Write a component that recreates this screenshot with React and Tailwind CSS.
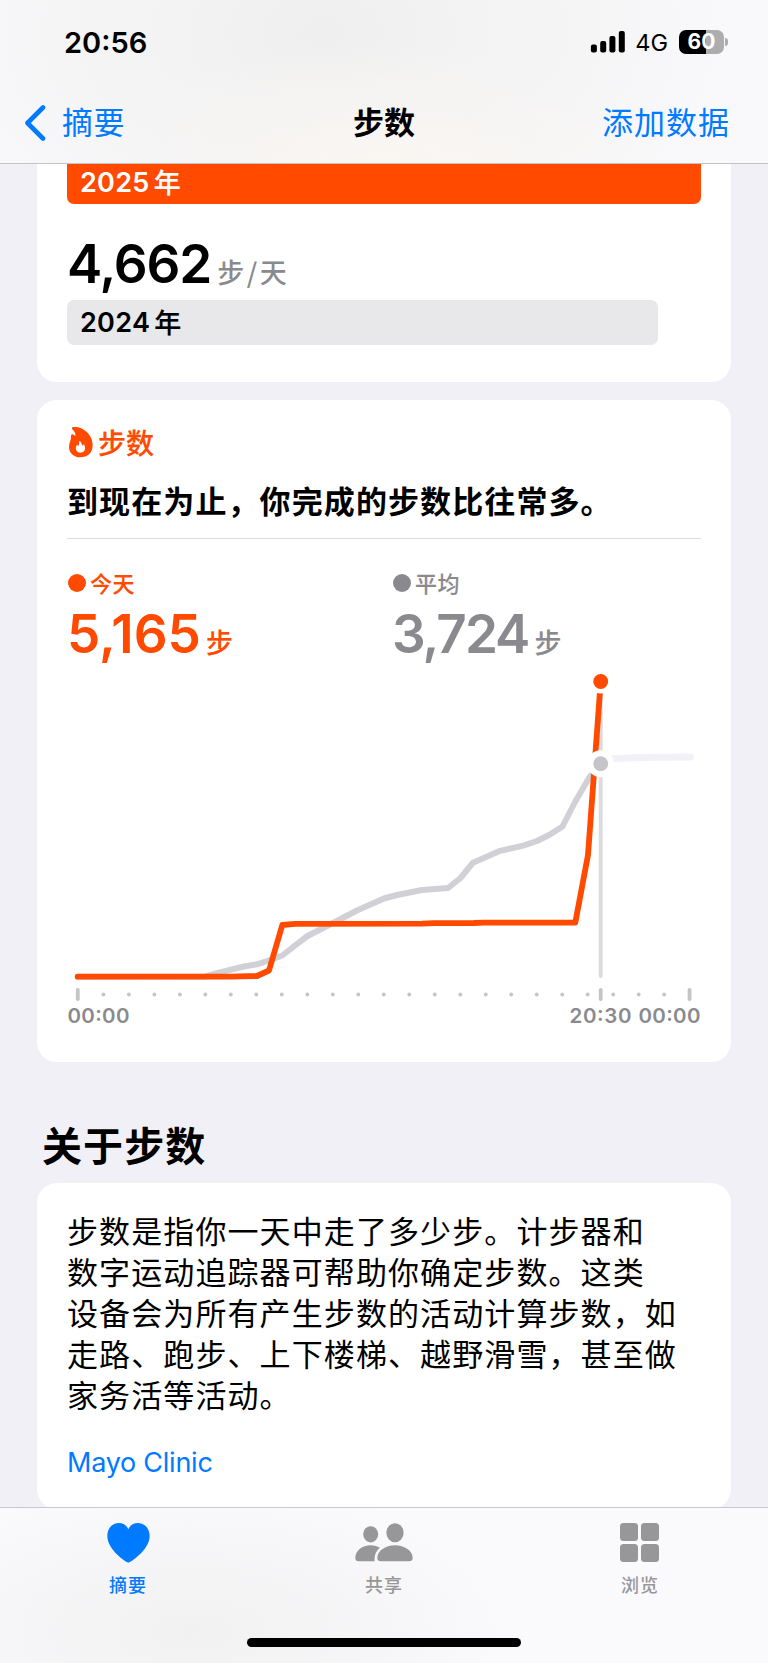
// App.jsx
import React from 'react';

const todayPoints =
  '77.7,976.7 231,976.7 240,976.3 257,976 269,970.5 282.3,925 295,923.8 422,923.7 434,923.1 474,923 484,922.6 575.3,922.6 588,855 600.7,681.5';

const averagePoints =
  '77.7,976.7 205,976.5 218,973 231,969.7 244,966.5 257,964.3 270,960 282.3,955.5 295,945.5 307.5,936 333,923 358,910 384,898.5 397,895 422,890 448,888 460.5,878 473,862.7 499,851.2 524,845.3 537,841 550,834.5 562.5,826.5 575,802 589,778 600.7,763.7';

const hours = Array.from({ length: 25 }, (_, i) => i);

const Flame = () => (
  <svg className="ml-px w-[26px] h-8" viewBox="115 108 78 96">
    <path
      fill="#ff4a00"
      fillRule="evenodd"
      d="M128 112C153 106 189 129 189 166C189 189 173 202 152 202C131 202 118 188 118 170C118 158 124 152 124 142C123 137 125 133 128 133C132 133 134 136 137 138C138 132 135 124 129 119C126 116 126 114 128 112ZM149 152C148 157 149 163 147 166C146 168 143 167 142 164C135 174 138 188 152 188C168 188 169 171 162 161C162 165 161 167 158 166C155 161 156 156 149 152Z"
    />
  </svg>
);

const StatusBar = () => (
  <div className="flex h-[84px] items-center justify-between pl-[64px] pr-[40px]">
    <div className="text-[29px] leading-none font-semibold">20:56</div>
    <div className="flex items-center">
      <svg className="w-[35px] h-6" viewBox="0 0 35 24">
        <rect x="0.9" y="14.5" width="6" height="8" rx="2" />
        <rect x="10.2" y="11" width="6" height="11.5" rx="2" />
        <rect x="19.4" y="6" width="6" height="16.5" rx="2" />
        <rect x="28.8" y="1" width="6" height="21.5" rx="2" />
      </svg>
      <span className="ml-[10px] pt-[2px] text-[23.5px] leading-none">4G</span>
      <div className="ml-[11px] flex h-6 w-[45px] items-center justify-center rounded-[7px] bg-[linear-gradient(90deg,#000_60%,#adadad_60%)] text-[21px] font-bold text-white">
        60
      </div>
      <div className="ml-[1px] h-2 w-[3px] rounded-r-full bg-[#adadad]"></div>
    </div>
  </div>
);

const Header = () => (
  <header className="h-[164px] shrink-0 border-b border-[#c4c3c6] bg-[radial-gradient(ellipse_300px_120px_at_50%_100%,#faf6f2_0%,transparent_100%),radial-gradient(ellipse_420px_260px_at_42%_20%,#efefef_0%,#f9f9fb_100%)]">
    <StatusBar />
    <div className="grid h-[78px] grid-cols-3 items-center pl-6 pr-[38px] text-[31px] leading-none font-['Noto_Sans_CJK_SC',sans-serif]">
      <div className="flex items-center text-[#007aff]">
        <svg className="w-[22px] h-[38px]" viewBox="0 0 22 38" fill="none">
          <path d="M19 3.5L3.5 19L19 34.5" stroke="currentColor" strokeWidth="4.6" strokeLinecap="round" strokeLinejoin="round" />
        </svg>
        <span className="ml-4 pb-[5px] tracking-[0.5px]">摘要</span>
      </div>
      <div className="pb-[5px] pl-[14px] text-center font-bold">步数</div>
      <div className="pb-[5px] text-right tracking-[1px] whitespace-nowrap text-[#007aff]">添加数据</div>
    </div>
  </header>
);

const Chart = () => (
  <svg className="block h-[362px] w-[634px]" viewBox="67 667 634 362">
    <g fill="none" strokeLinejoin="round">
      <path d="M600.7 686V976" stroke="#dcdcde" strokeWidth="4" strokeLinecap="round" />
      <path d="M602 759.2L639 757.6L690.5 757" stroke="#f2f1f7" strokeWidth="7" strokeLinecap="round" />
      <polyline points={averagePoints} stroke="#d1d0d6" strokeWidth="6" strokeLinecap="round" />
      <polyline points={todayPoints} stroke="#ff4a00" strokeWidth="5.8" strokeLinecap="round" />
    </g>
    <circle cx="600.7" cy="681.5" r="12" fill="#fff" />
    <circle cx="600.7" cy="681.5" r="7.4" fill="#ff4a00" />
    <circle cx="600.7" cy="763.7" r="13.5" fill="#fff" />
    <circle cx="600.7" cy="763.7" r="7.4" fill="#c5c5c7" />

    {/* Hour scale */}
    <g fill="#c5c5c7">
      {hours.map((h) =>
        h % 24 === 0 ? (
          <rect key={h} x={75.9 + h * 25.49} y="988" width="3.8" height="13" rx="1.8" />
        ) : (
          <circle key={h} cx={77.9 + h * 25.49} cy="994.5" r="1.9" />
        )
      )}
      <rect x="598.8" y="988" width="3.8" height="13" rx="1.8" />
    </g>
    <g fill="#8a8a8e" fontSize="20.5" fontWeight="600">
      <text x="67.5" y="1023" textLength="62">00:00</text>
      <text x="569.5" y="1023" textLength="62">20:30</text>
      <text x="638.5" y="1023" textLength="62">00:00</text>
    </g>
  </svg>
);

const Legend = ({ label, value, className, valueClass, dot }) => (
  <div className={`w-[325px] shrink-0 ${className}`}>
    <div className="flex h-6 items-center">
      <span className={`size-[18px] rounded-full ml-px ${dot}`}></span>
      <span className="ml-1 pb-[3px] text-[22px] leading-none font-medium tracking-[0.5px] font-['Noto_Sans_CJK_SC',sans-serif] [-webkit-text-stroke:0.15px]">{label}</span>
    </div>
    <div className="flex items-baseline pt-[13px]">
      <span className={`text-[53px] leading-none font-semibold ${valueClass}`}>{value}</span>
      <span className="text-[27px] leading-none font-medium font-['Noto_Sans_CJK_SC',sans-serif] [-webkit-text-stroke:0.15px]">步</span>
    </div>
  </div>
);

const Tab = ({ label, active, children }) => (
  <div className={`flex flex-1 flex-col items-center pt-[15px] ${active ? 'text-[#007aff]' : 'text-[#979799]'}`}>
    {children}
    <span className="mt-[12px] text-[18px] leading-none font-medium tracking-[1px] font-['Noto_Sans_CJK_SC',sans-serif]">{label}</span>
  </div>
);

const App = () => {
  return (
    <div className="flex h-[1663px] w-[768px] flex-col overflow-hidden bg-[#f1f0f6] text-black font-['Inter','Noto_Sans_CJK_SC',sans-serif]">
      <Header />

      <main className="min-h-0 flex-1 px-[37px]">
        {/* Yearly averages */}
        <section className="h-[218px] rounded-b-[20px] bg-white px-[30px]">
          <div className="flex h-10 items-center rounded-b-[7px] bg-[#ff4a00] pl-[13px] pb-1 text-[27px] leading-none font-semibold tracking-[0.3px] text-white">
            2025<span className="ml-1 pb-[2px] font-medium font-['Noto_Sans_CJK_SC',sans-serif] [-webkit-text-stroke:0.2px]">年</span>
          </div>
          <div className="flex h-24 items-baseline pt-[33.5px]">
            <span className="text-[53px] leading-none font-semibold tracking-[-1.1px]">4,662</span>
            <span className="ml-[6px] text-[27px] leading-none font-medium tracking-[2.5px] text-[#8a8a8e] font-['Noto_Sans_CJK_SC',sans-serif]">步/天</span>
          </div>
          <div className="flex h-[45px] w-[591px] items-center rounded-[7px] bg-[#e8e8ea] pl-[13px] text-[27px] leading-none font-semibold tracking-[0.3px]">
            2024<span className="ml-1 pb-[2px] font-medium font-['Noto_Sans_CJK_SC',sans-serif] [-webkit-text-stroke:0.2px]">年</span>
          </div>
        </section>

        {/* Steps today */}
        <section className="mt-[18px] h-[662px] rounded-[20px] bg-white px-[30px] pt-[26px]">
          <div className="flex h-8 items-center text-[#ff4a00]">
            <Flame />
            <span className="ml-[4px] pb-[1px] text-[28px] leading-none font-medium font-['Noto_Sans_CJK_SC',sans-serif] [-webkit-text-stroke:0.25px]">步数</span>
          </div>
          <h2 className="mt-[19px] h-[62px] border-b border-[#dcdbe2] text-[31px] leading-[46px] font-bold tracking-[1.1px] font-['Noto_Sans_CJK_SC',sans-serif]">
            到现在为止，你完成的步数比往常多。
          </h2>
          <div className="mt-[32px] flex h-[96px]">
            <Legend label="今天" value="5,165" className="text-[#ff4a00]" valueClass="mr-[5px]" dot="bg-[#ff4a00]" />
            <Legend label="平均" value="3,724" className="text-[#8a8a8e]" valueClass="mr-[6px] tracking-[-2px]" dot="bg-[#8a8a8e]" />
          </div>
          <Chart />
        </section>

        {/* About */}
        <h1 className="mt-[60px] h-[61px] pl-[5px] text-[40px] leading-[44px] font-bold tracking-[1.1px] font-['Noto_Sans_CJK_SC',sans-serif]">关于步数</h1>
        <section className="h-[326px] rounded-[20px] bg-white px-[30px] pt-[26px]">
          <p className="text-[31px] leading-[41px] tracking-[1.1px] whitespace-nowrap font-['Noto_Sans_CJK_SC',sans-serif]">
            步数是指你一天中走了多少步。计步器和<br />
            数字运动追踪器可帮助你确定步数。这类<br />
            设备会为所有产生步数的活动计算步数，如<br />
            走路、跑步、上下楼梯、越野滑雪，甚至做<br />
            家务活等活动。
          </p>
          <a className="mt-[31px] block text-[27px] leading-9 tracking-[-0.25px] text-[#007aff]">Mayo Clinic</a>
        </section>
      </main>

      <footer className="h-[156px] shrink-0 border-t border-[#c9c9cc] bg-[radial-gradient(ellipse_330px_150px_at_25%_80%,#f1f1f2_0%,#fafafc_100%)]">
        <div className="flex h-[130px]">
          <Tab label="摘要" active>
            <svg className="h-10 w-[43px]" viewBox="320 279 129 120" fill="currentColor">
              <path d="M384 398C379 398 321 360 321 318C321 294 337 279 356 279C369 279 380 287 384 298C388 287 399 279 412 279C432 279 448 295 448 318C448 360 389 398 384 398Z" />
            </svg>
          </Tab>
          <Tab label="共享">
            <svg className="h-10 w-[58px]" viewBox="1064 279 174 120" fill="currentColor">
              <ellipse cx="1111" cy="313" rx="22.5" ry="24.5" />
              <ellipse cx="1184" cy="308" rx="26" ry="28.5" />
              <path d="M1075 394Q1065 394 1065 384C1065 362 1086 346 1111 346C1122 346 1131 349 1139 353C1128 361 1121 376 1123 394Z" />
              <path d="M1142 394Q1131 394 1131 384C1131 363 1155 346 1184 346C1213 346 1237 363 1237 384Q1237 394 1226 394Z" />
            </svg>
          </Tab>
          <Tab label="浏览">
            <svg className="size-10" viewBox="0 0 40 40" fill="currentColor">
              <rect x="0" y="0" width="18" height="18" rx="3.5" />
              <rect x="21" y="0" width="18" height="18" rx="3.5" />
              <rect x="0" y="21" width="18" height="18" rx="3.5" />
              <rect x="21" y="21" width="18" height="18" rx="3.5" />
            </svg>
          </Tab>
        </div>
        <div className="mx-auto h-[9px] w-[274px] rounded-full bg-black"></div>
      </footer>
    </div>
  );
};

export default App;
